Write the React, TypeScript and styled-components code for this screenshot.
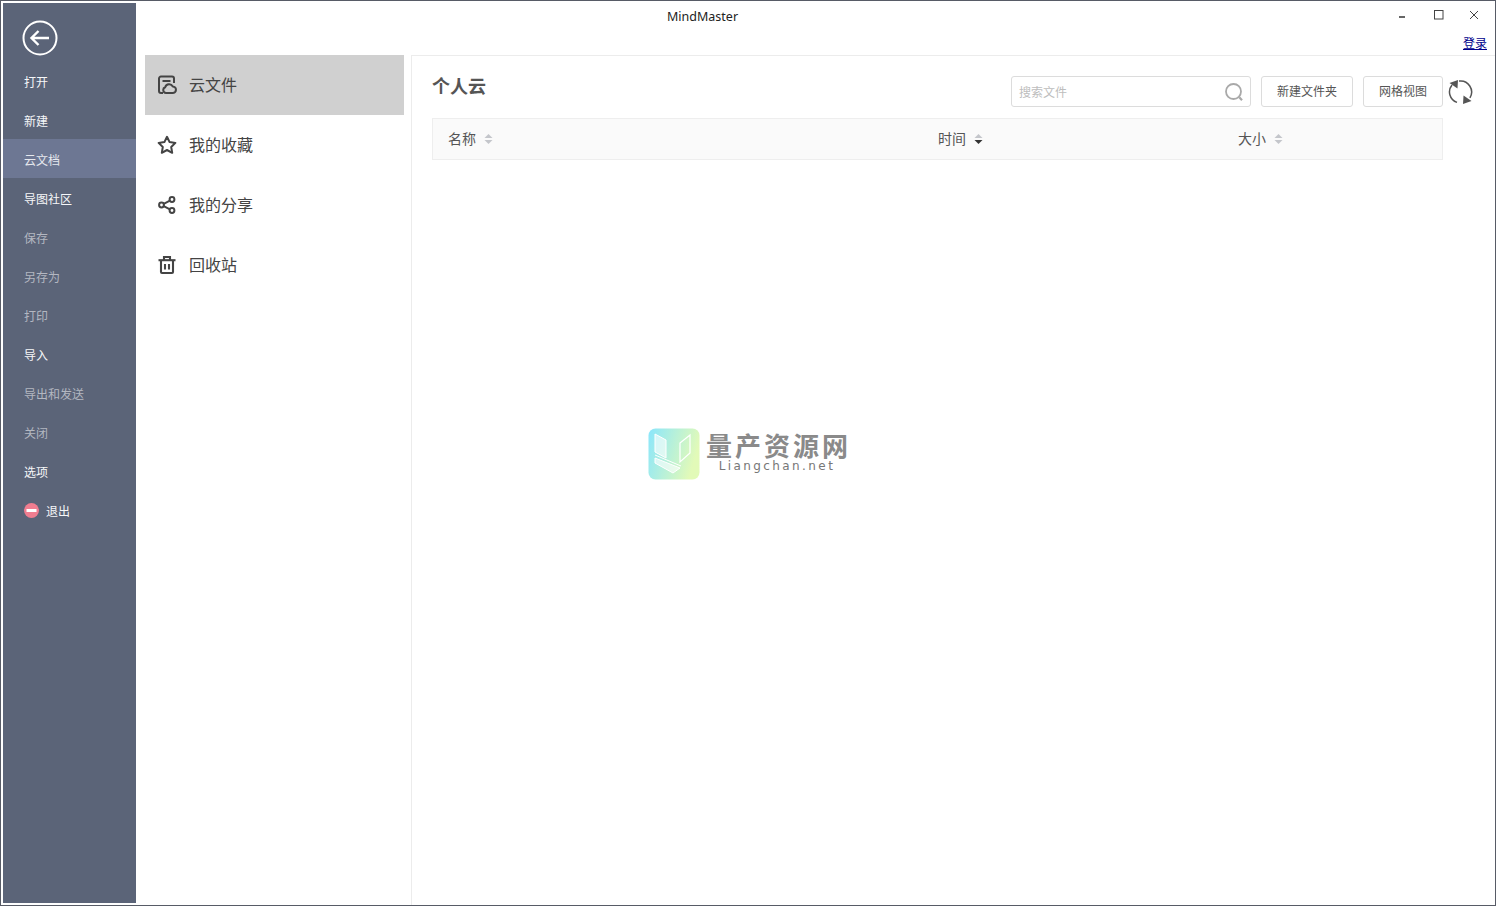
import React from 'react';
import styled, { createGlobalStyle } from 'styled-components';

const GlobalStyle = createGlobalStyle`
  html, body {
    margin: 0;
    background: #fff;
  }
  body {
    font-family: "Noto Sans CJK SC", "Noto Sans", sans-serif;
  }
  * {
    box-sizing: border-box;
  }
`;

const Frame = styled.div`
  position: relative;
  display: flex;
  width: 1496px;
  height: 906px;
  border: 1px solid #575b66;
  background: #fff;
  overflow: hidden;
`;

const Sidebar = styled.aside`
  flex: 0 0 133px;
  margin: 2px 0 2px 2px;
  background: #5b6478;
  padding-top: 17px;
`;

const BackButton = styled.button`
  display: block;
  width: 36px;
  height: 36px;
  margin: 0 0 5px 19px;
  padding: 0;
  border: 0;
  background: none;
  color: #fff;
`;

const SideItem = styled.div<{ $active?: boolean; $disabled?: boolean }>`
  display: flex;
  align-items: center;
  gap: 7px;
  height: 39px;
  padding: 2px 0 0 21px;
  font-size: 12px;
  background: ${(p) => (p.$active ? '#6d7793' : 'transparent')};
  color: ${(p) => (p.$disabled ? '#b3b7c1' : p.$active ? '#e6e8ee' : '#f6f7f9')};
`;

const Main = styled.div`
  flex: 1;
  display: flex;
  flex-direction: column;
  min-width: 0;
`;

const TitleBar = styled.header`
  flex: 0 0 54px;
  display: flex;
  justify-content: space-between;
  padding-right: 4px;
`;

const AppTitle = styled.div`
  margin: 7px 0 0 531px;
  font-family: "Noto Sans", sans-serif;
  font-size: 12.5px;
  line-height: 18px;
  color: #222;
`;

const TitleRight = styled.div`
  display: flex;
  flex-direction: column;
  align-items: flex-end;
`;

const WindowControls = styled.div`
  display: flex;
  height: 28px;
`;

const WindowButton = styled.button`
  display: flex;
  align-items: center;
  justify-content: center;
  width: 35px;
  height: 28px;
  padding: 0;
  border: 0;
  background: none;
  color: #444;
`;

const LoginLink = styled.a`
  margin: 5px 4px 0 0;
  font-size: 12px;
  line-height: 18px;
  color: #00008b;
  text-decoration: underline;
`;

const Body = styled.div`
  flex: 1;
  display: flex;
  min-height: 0;
`;

const NavPanel = styled.nav`
  flex: 0 0 275px;
  padding: 0 7px 0 9px;
`;

const NavItem = styled.div<{ $active?: boolean }>`
  display: flex;
  align-items: center;
  gap: 12px;
  height: 60px;
  padding-left: 12px;
  font-size: 16px;
  color: #444;
  background: ${(p) => (p.$active ? '#d0d0d0' : 'transparent')};
`;

const NavLabel = styled.span`
  margin-bottom: 2px;
`;

const Content = styled.section`
  flex: 1;
  border-top: 1px solid #ececec;
  border-left: 1px solid #ececec;
  padding: 20px 22px 0 20px;
`;

const ContentHead = styled.div`
  display: flex;
  align-items: center;
  height: 31px;
`;

const Heading = styled.h2`
  margin: 0 auto 14px 0;
  font-size: 18px;
  font-weight: 700;
  color: #555;
`;

const SearchBox = styled.div`
  display: flex;
  align-items: center;
  justify-content: space-between;
  width: 240px;
  height: 31px;
  padding: 0 6px 0 7px;
  margin-right: 10px;
  border: 1px solid #dcdcdc;
  border-radius: 3px;
  font-size: 12px;
  color: #bdbdbd;
`;

const ToolButton = styled.button<{ $width: number }>`
  width: ${(p) => p.$width}px;
  height: 31px;
  padding: 0 0 2px;
  margin-right: 10px;
  border: 1px solid #dcdcdc;
  border-radius: 3px;
  background: #fff;
  font-family: inherit;
  font-size: 12px;
  color: #555;

  &:last-of-type {
    margin-right: 5px;
  }
`;

const TableHead = styled.div`
  display: grid;
  grid-template-columns: 490px 300px 1fr;
  align-items: center;
  height: 42px;
  margin: 11px 30px 0 0;
  padding: 0 0 2px 15px;
  background: #fafafa;
  border: 1px solid #eeeeee;
`;

const HeadCell = styled.div`
  display: flex;
  align-items: center;
  gap: 8px;
  font-size: 14px;
  color: #555;

  svg {
    margin-top: 2px;
  }
`;

const Watermark = styled.div`
  position: absolute;
  left: 647px;
  top: 427px;
  display: flex;
  gap: 6px;
`;

const WatermarkText = styled.div`
  display: flex;
  flex-direction: column;
  align-items: center;
  padding-top: 2px;
`;

const WatermarkName = styled.div`
  font-size: 26px;
  line-height: 29px;
  font-weight: 700;
  letter-spacing: 3px;
  margin-right: -3px;
  color: #8a8a8a;
`;

const WatermarkUrl = styled.div`
  font-family: "DejaVu Sans", sans-serif;
  font-size: 12px;
  line-height: 15px;
  letter-spacing: 2.4px;
  color: #777;
`;

const SortIcon = ({ down }: { down?: boolean }) => (
  <svg width="9" height="12" viewBox="0 0 9 12">
    <path d="M4.5 1 L8.5 5 H0.5 Z" fill="#c4c6cb" />
    <path d="M4.5 11 L8.5 7 H0.5 Z" fill={down ? '#333' : '#c4c6cb'} />
  </svg>
);

const CloudFileIcon = () => (
  <svg width="20" height="20" viewBox="0 0 20 20" fill="none" stroke="#444" strokeWidth="2">
    <path d="M6 18 H4 A2 2 0 0 1 2 16 V3.5 A2 2 0 0 1 4 1.5 H15 A2 2 0 0 1 17 3.5 V8" />
    <path d="M5.5 6 H13.5" />
    <path d="M9 18 A3 3 0 0 1 8.2 12.2 A4.2 4.2 0 0 1 15.8 11.4 A3.3 3.3 0 0 1 15.5 18 Z" />
  </svg>
);

const StarIcon = () => (
  <svg width="20" height="20" viewBox="0 0 20 20" fill="none" stroke="#444" strokeWidth="2" strokeLinejoin="round">
    <path d="M10 1.8 L12.6 7.1 L18.4 7.9 L14.2 12 L15.2 17.8 L10 15 L4.8 17.8 L5.8 12 L1.6 7.9 L7.4 7.1 Z" />
  </svg>
);

const ShareIcon = () => (
  <svg width="20" height="20" viewBox="0 0 20 20" fill="none" stroke="#444" strokeWidth="2">
    <circle cx="15" cy="4.5" r="2.4" />
    <circle cx="4.5" cy="10" r="2.4" />
    <circle cx="15" cy="15.5" r="2.4" />
    <path d="M6.7 8.9 L12.9 5.6 M6.7 11.1 L12.9 14.4" />
  </svg>
);

const TrashIcon = () => (
  <svg width="20" height="20" viewBox="0 0 20 20" fill="none" stroke="#444" strokeWidth="2.1">
    <path d="M1.5 5.2 H18.5" />
    <path d="M7 5 V2 H13 V5" />
    <path d="M4 5.2 V17 A1 1 0 0 0 5 18 H15 A1 1 0 0 0 16 17 V5.2" />
    <path d="M8 9 V14.5 M12 9 V14.5" />
  </svg>
);

const SearchIcon = () => (
  <svg width="20" height="20" viewBox="0 0 20 20" fill="none" stroke="#a9a9a9">
    <circle cx="9.5" cy="9.5" r="7.5" strokeWidth="1.8" />
    <path d="M15.3 15.3 L18 18.2" strokeWidth="2.2" />
  </svg>
);

const RefreshIcon = () => (
  <svg width="25" height="26" viewBox="0 0 25 26" fill="none" stroke="#555" strokeWidth="1.5">
    <path d="M4 6 A11 11 0 0 0 9 23.4" />
    <path d="M11 2.1 A11 11 0 0 1 21.9 18.8" />
    <path d="M10 1 L9.5 9.5 L1.5 4 Z" fill="#555" stroke="none" />
    <path d="M15 25 L15.5 16.5 L23.5 22 Z" fill="#555" stroke="none" />
  </svg>
);

const LogoMark = () => (
  <svg width="52" height="52" viewBox="0 0 52 52">
    <defs>
      <linearGradient id="logoFill" x1="0" y1="0" x2="1" y2="0.3">
        <stop offset="0" stopColor="#8ae6fc" />
        <stop offset="1" stopColor="#e2fab8" />
      </linearGradient>
    </defs>
    <rect x="0.5" y="0.5" width="51" height="51" rx="7" fill="url(#logoFill)" />
    <path d="M7 6 L18 12 V30 L7 24 Z" fill="#fff" fillOpacity="0.6" stroke="#fff" strokeWidth="1" />
    <path d="M7 27 L33 38" fill="none" stroke="#fff" strokeWidth="1" />
    <path d="M7 30 L32 40 L25 45 L7 35 Z" fill="#fff" fillOpacity="0.6" stroke="#fff" strokeWidth="1" />
    <path d="M32 15 L42 7 V25 L32 34 Z" fill="none" stroke="#fff" strokeWidth="1.2" />
  </svg>
);

const sideItems = [
  { label: '打开' },
  { label: '新建' },
  { label: '云文档', active: true },
  { label: '导图社区' },
  { label: '保存', disabled: true },
  { label: '另存为', disabled: true },
  { label: '打印', disabled: true },
  { label: '导入' },
  { label: '导出和发送', disabled: true },
  { label: '关闭', disabled: true },
  { label: '选项' },
];

const navItems = [
  { label: '云文件', icon: <CloudFileIcon />, active: true },
  { label: '我的收藏', icon: <StarIcon /> },
  { label: '我的分享', icon: <ShareIcon /> },
  { label: '回收站', icon: <TrashIcon /> },
];

export default function App() {
  return (
    <>
      <GlobalStyle />
      <Frame>
        <Sidebar>
          <BackButton>
            <svg width="36" height="36" viewBox="0 0 36 36" fill="none" stroke="currentColor">
              <circle cx="18" cy="18" r="16.5" strokeWidth="2" />
              <path d="M27 18 H10 M16.5 11 L9.5 18 L16.5 25" strokeWidth="2.4" />
            </svg>
          </BackButton>
          {sideItems.map((item) => (
            <SideItem key={item.label} $active={item.active} $disabled={item.disabled}>
              {item.label}
            </SideItem>
          ))}
          <SideItem>
            <svg width="15" height="15" viewBox="0 0 15 15">
              <circle cx="7.5" cy="7.5" r="7.5" fill="#f07d90" />
              <rect x="2.5" y="6" width="10" height="3" fill="#fff" />
            </svg>
            退出
          </SideItem>
        </Sidebar>
        <Main>
          <TitleBar>
            <AppTitle>MindMaster</AppTitle>
            <TitleRight>
              <WindowControls>
                <WindowButton>
                  <svg width="10" height="10" viewBox="0 0 10 10">
                    <rect x="0" y="6" width="6" height="2" fill="#666" />
                  </svg>
                </WindowButton>
                <WindowButton>
                  <svg width="10" height="10" viewBox="0 0 10 10" fill="none" stroke="currentColor">
                    <rect x="0.5" y="0.5" width="8.5" height="8.5" />
                  </svg>
                </WindowButton>
                <WindowButton>
                  <svg width="10" height="10" viewBox="0 0 10 10" fill="none" stroke="currentColor">
                    <path d="M1 1 L9 9 M9 1 L1 9" />
                  </svg>
                </WindowButton>
              </WindowControls>
              <LoginLink>登录</LoginLink>
            </TitleRight>
          </TitleBar>
          <Body>
            <NavPanel>
              {navItems.map((item) => (
                <NavItem key={item.label} $active={item.active}>
                  {item.icon}
                  <NavLabel>{item.label}</NavLabel>
                </NavItem>
              ))}
            </NavPanel>
            <Content>
              <ContentHead>
                <Heading>个人云</Heading>
                <SearchBox>
                  搜索文件
                  <SearchIcon />
                </SearchBox>
                <ToolButton $width={92}>新建文件夹</ToolButton>
                <ToolButton $width={80}>网格视图</ToolButton>
                <RefreshIcon />
              </ContentHead>
              <TableHead>
                <HeadCell>
                  名称
                  <SortIcon />
                </HeadCell>
                <HeadCell>
                  时间
                  <SortIcon down />
                </HeadCell>
                <HeadCell>
                  大小
                  <SortIcon />
                </HeadCell>
              </TableHead>
            </Content>
          </Body>
        </Main>
        <Watermark>
          <LogoMark />
          <WatermarkText>
            <WatermarkName>量产资源网</WatermarkName>
            <WatermarkUrl>Liangchan.net</WatermarkUrl>
          </WatermarkText>
        </Watermark>
      </Frame>
    </>
  );
}
